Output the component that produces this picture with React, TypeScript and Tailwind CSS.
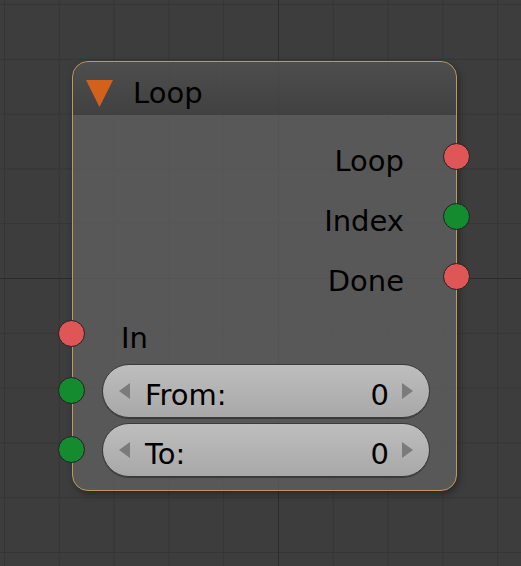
import React from "react";

type SocketKind = "flow" | "int";

function Socket({ kind, side, top }: { kind: SocketKind; side: "left" | "right"; top: string }) {
  const color = kind === "flow" ? "bg-[#de5656]" : "bg-[#138b2e]";
  const pos = side === "left" ? "left-[-15px]" : "right-[-14px]";
  return (
    <span
      className={`absolute ${pos} ${top} w-[27px] h-[27px] rounded-full border border-[#222222] ${color}`}
    />
  );
}

function Arrow({ dir }: { dir: "left" | "right" }) {
  return (
    <svg width="11" height="16" viewBox="0 0 11 16" className="shrink-0">
      {dir === "left" ? (
        <polygon points="11,0 11,16 0,8" fill="#7b7b7b" />
      ) : (
        <polygon points="0,0 0,16 11,8" fill="#7b7b7b" />
      )}
    </svg>
  );
}

function IntField({ label, value }: { label: string; value: number }) {
  return (
    <div className="relative h-[54px] flex items-center">
      <Socket kind="int" side="left" top="top-[13px]" />
      <div className="ml-[29px] mr-[26px] flex-1 h-full flex items-center rounded-full border border-[#3b3b3b] bg-gradient-to-b from-[#bebebe] to-[#a8a8a8] shadow-[0_1px_0_rgba(0,0,0,0.35)] px-[16px]">
        <Arrow dir="left" />
        <span className="ml-[15px] flex-1 leading-none pt-[8px]">{label}</span>
        <span className="leading-none pt-[8px]">{value}</span>
        <span className="ml-[13px] flex">
          <Arrow dir="right" />
        </span>
      </div>
    </div>
  );
}

export default function App() {
  const outputs: { name: string; kind: SocketKind }[] = [
    { name: "Loop", kind: "flow" },
    { name: "Index", kind: "int" },
    { name: "Done", kind: "flow" },
  ];

  return (
    <div className="w-[521px] h-[566px] overflow-hidden bg-[#3d3d3d] bg-[image:linear-gradient(to_right,#2c2c2c_1px,transparent_1px),linear-gradient(to_bottom,#2c2c2c_1px,transparent_1px),linear-gradient(to_right,#353535_1px,transparent_1px),linear-gradient(to_bottom,#353535_1px,transparent_1px)] bg-[length:548px_548px,548px_548px,54.8px_54.8px,54.8px_54.8px] bg-[position:278px_278px,278px_278px,4px_4px,4px_4px] pt-[61px] pl-[72px] font-['DejaVu_Sans',sans-serif] text-[29px] text-black">
      {/* Node */}
      <div className="w-[385px] h-[430px] rounded-[16px] border border-[#c2955f] bg-[#5f5f5f]/80 shadow-[2px_3px_7px_rgba(0,0,0,0.35)] flex flex-col">
        {/* Header */}
        <div className="h-[53px] shrink-0 rounded-t-[15px] bg-gradient-to-b from-[#2e2e2e]/25 to-[#2a2a2a]/50 flex items-center pt-[10px] pl-[13px]">
          <svg width="27" height="27" viewBox="0 0 27 27" className="shrink-0">
            <polygon points="0,0 27,0 13.5,27" fill="#d3611c" />
          </svg>
          <span className="ml-[20px] leading-none">Loop</span>
        </div>

        {/* Outputs */}
        <div className="pt-[15px] flex flex-col">
          {outputs.map((o) => (
            <div key={o.name} className="relative h-[60px] flex items-center justify-end pr-[52px]">
              <span className="leading-none pt-[3px]">{o.name}</span>
              <Socket kind={o.kind} side="right" top="top-[13px]" />
            </div>
          ))}
        </div>

        {/* Inputs */}
        <div className="relative h-[52px] flex items-center pl-[48px]">
          <Socket kind="flow" side="left" top="top-[10px]" />
          <span className="leading-none pt-[4px]">In</span>
        </div>
        <div className="mt-[2px] flex flex-col gap-[5px]">
          <IntField label="From:" value={0} />
          <IntField label="To:" value={0} />
        </div>
      </div>
    </div>
  );
}
